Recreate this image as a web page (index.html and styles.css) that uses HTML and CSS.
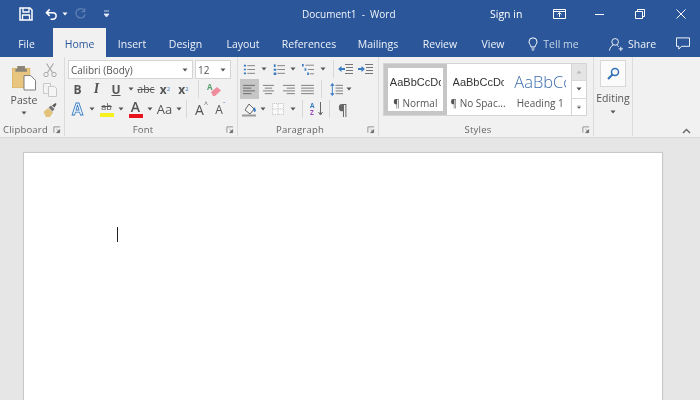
FILE: index.html
```html
<!DOCTYPE html>
<html lang="en">
<head>
<meta charset="utf-8">
<title>Document1 - Word</title>
<link rel="stylesheet" href="styles.css">
</head>
<body>
<svg class="defs" width="0" height="0">
  <symbol id="caret" viewBox="0 0 6 4"><path d="M0.5 0.5h5L3 3.5z" fill="currentColor"/></symbol>
  <symbol id="launch" viewBox="0 0 9 9"><path d="M1 7.500V1h7" fill="none" stroke="#8a8a8a"/><path d="M4 3.500l3 3M7.500 4v3.500H4z" fill="#666" stroke="#666" stroke-width=".7"/></symbol>
  <symbol id="lines3" viewBox="0 0 14 12"><path d="M0 1.500h14M0 4.500h14M0 7.500h14M0 10.500h14" stroke="#777" stroke-width="1"/></symbol>
  <symbol id="center3" viewBox="0 0 14 12"><path d="M1 1.500h12M3 4.500h8M1 7.500h12M3 10.500h8" stroke="#777" stroke-width="1"/></symbol>
  <symbol id="right3" viewBox="0 0 14 12"><path d="M1 1.500h13M5 4.500h9M1 7.500h13M5 10.500h9" stroke="#777" stroke-width="1"/></symbol>
  <symbol id="left3" viewBox="0 0 14 12"><path d="M0 1.500h13M0 4.500h9M0 7.500h13M0 10.500h9" stroke="#666" stroke-width="1"/></symbol>
</svg>

<header class="titlebar">
  <div class="qat">
    <svg class="ico save" viewBox="0 0 14 14"><path d="M1 1h10l2 2v10H1z" fill="none" stroke="#fff" stroke-width="1.500"/><path d="M4 1v4h6V1M3.500 13V8h7v5" fill="none" stroke="#fff" stroke-width="1.300"/></svg>
    <svg class="ico undo" viewBox="0 0 14 14"><path d="M5 1.500L1.500 5 5 8.500M2 5h6.500a3.500 3.500 0 0 1 0 7H6" fill="none" stroke="#fff" stroke-width="1.600"/></svg>
    <svg class="car qcar" viewBox="0 0 6 4"><use href="#caret"/></svg>
    <svg class="ico redo" viewBox="0 0 14 14"><path d="M11 2.500A5 5 0 1 0 12 7M11.500 .5v3.500H8" fill="none" stroke="#5f80b3" stroke-width="1.400"/></svg>
    <svg class="ico cust" viewBox="0 0 7 8"><path d="M1 1h5M1 4h5L3.500 7z" fill="#e8eef7" stroke="#e8eef7" stroke-width=".8"/></svg>
  </div>
  <div class="doc-title">Document1&nbsp; -&nbsp; Word</div>
  <div class="win">
    <span class="signin">Sign in</span>
    <svg class="ico opts" viewBox="0 0 13 10"><path d="M.5 .5h12v9H.5zM.5 2.500h12" fill="none" stroke="#fff"/><path d="M6.500 8V4M4.500 5.500l2-2 2 2" fill="none" stroke="#fff"/></svg>
    <svg class="ico min" viewBox="0 0 10 10"><path d="M0 5.500h9" stroke="#fff" stroke-width="1"/></svg>
    <svg class="ico rest" viewBox="0 0 10 10"><path d="M.5 2.500h7v7h-7zM2.500 2.500v-2h7v7h-2" fill="none" stroke="#fff"/></svg>
    <svg class="ico close" viewBox="0 0 10 10"><path d="M.5 .5l9 9M9.500 .5l-9 9" stroke="#fff" stroke-width="1"/></svg>
  </div>
</header>

<nav class="tabs">
  <a class="tab t-file">File</a>
  <a class="tab t-home active">Home</a>
  <a class="tab t-insert">Insert</a>
  <a class="tab t-design">Design</a>
  <a class="tab t-layout">Layout</a>
  <a class="tab t-refs">References</a>
  <a class="tab t-mail">Mailings</a>
  <a class="tab t-review">Review</a>
  <a class="tab t-view">View</a>
  <a class="tab t-tell">
    <svg class="bulb" viewBox="0 0 10 14"><path d="M3 10C3 8 1 7 1 4.800a4 4 0 0 1 8 0C9 7 7 8 7 10zM3.500 12h3M4.500 13.500h1" fill="none" stroke="#fff"/></svg>
    <span class="tell">Tell me</span>
  </a>
  <a class="tab t-share">
    <svg class="person" viewBox="0 0 16 15"><circle cx="7" cy="4.500" r="3.800" fill="none" stroke="#fff"/><path d="M.5 14.500c.5-3.500 2.500-6 4.500-6.200M9 8.500c1 .4 1.500.8 2 1.500M11 12.500h5M13.500 10v5" fill="none" stroke="#fff"/></svg>
    <span>Share</span>
  </a>
  <svg class="comment" viewBox="0 0 15 13"><path d="M.5 .5h14v9H6l-3 3v-3H.5z" fill="none" stroke="#fff"/></svg>
</nav>

<section class="ribbon">
  <div class="group g-clip">
    <div class="clip-body">
      <div class="paste">
        <svg class="paste-ico" viewBox="0 0 25 26"><rect x=".5" y="3" width="18" height="20" fill="#e8c67f" stroke="#dcb76c"/><rect x="5.500" y=".5" width="8" height="4" fill="#8c8579"/><rect x="3.500" y="3.500" width="12" height="3" fill="#8a8478"/><path d="M12.500 10.500h7l5 5v10h-12z" fill="#fff" stroke="#777"/></svg>
        <span class="paste-l">Paste</span>
        <svg class="car" viewBox="0 0 6 4"><use href="#caret"/></svg>
      </div>
      <div class="clip-tools">
        <svg class="tool" viewBox="0 0 14 14"><path d="M3.500 .5L9.500 9.500M10.500 .5L4.500 9.500" fill="none" stroke="#a8a8a8" stroke-width="1.200"/><circle cx="3" cy="11.500" r="2.200" fill="none" stroke="#a8a8a8"/><circle cx="11" cy="11.500" r="2.200" fill="none" stroke="#a8a8a8"/></svg>
        <svg class="tool" viewBox="0 0 14 14"><path d="M.5 .5h7v3M.5 .5v10h4M5.500 3.500h6l2 2v8h-8z" fill="#f5f5f5" stroke="#c8c8c8"/></svg>
        <svg class="tool" viewBox="0 0 14 14"><path d="M.5 9l4.500-4 5 4.500-3 4.500H3z" fill="#e3c27c"/><path d="M5.500 4.500l2.500-2 3.500 3.500-2 2.500z" fill="#777"/><path d="M9 2.500l3.500-2.500 1 1L11.500 4.500z" fill="#555"/></svg>
      </div>
    </div>
    <div class="glabel"><span>Clipboard</span><svg class="launch" viewBox="0 0 9 9"><use href="#launch"/></svg></div>
  </div>

  <div class="group g-font">
    <div class="font-body">
      <div class="font-top">
        <div class="combo c-name"><span>Calibri (Body)</span><svg class="car" viewBox="0 0 6 4"><use href="#caret"/></svg></div>
        <div class="combo c-size"><span>12</span><svg class="car" viewBox="0 0 6 4"><use href="#caret"/></svg></div>
      </div>
      <div class="rrow">
        <span class="fb w19 bold">B</span>
        <span class="fb w19 ital">I</span>
        <span class="fb w20 under">U</span>
        <svg class="car cw" viewBox="0 0 6 4"><use href="#caret"/></svg>
        <span class="fb w20 strike">abc</span>
        <span class="fb w18 bold sm">x<sub>2</sub></span>
        <span class="fb w19 bold sm">x<sup>2</sup></span>
        <span class="vsep sp-e"></span>
        <svg class="tool eraser" viewBox="0 0 16 15"><text x="1" y="8" class="era-a">A</text><path d="M5 10l6-5 4 3.500-6 5.500H7z" fill="#ee8d9d"/></svg>
      </div>
      <div class="rrow">
        <span class="fb w19 a-blue">A</span>
        <svg class="car cs" viewBox="0 0 6 4"><use href="#caret"/></svg>
        <span class="fb w19 hl"><span class="hl-t">ab</span><i class="bar yellow"></i></span>
        <svg class="car cs" viewBox="0 0 6 4"><use href="#caret"/></svg>
        <span class="fb w19 col"><span class="col-t">A</span><i class="bar red"></i></span>
        <svg class="car cs" viewBox="0 0 6 4"><use href="#caret"/></svg>
        <span class="fb w19 aa">Aa</span>
        <svg class="car cs" viewBox="0 0 6 4"><use href="#caret"/></svg>
        <span class="vsep sp-g"></span>
        <span class="fb w19 grow">A<b class="hat">^</b></span>
        <span class="fb w19 shrink">A<b class="hat blue">ˇ</b></span>
      </div>
    </div>
    <div class="glabel"><span>Font</span><svg class="launch" viewBox="0 0 9 9"><use href="#launch"/></svg></div>
  </div>

  <div class="group g-para">
    <div class="para-body">
      <div class="rrow r-lists">
        <svg class="pi" viewBox="0 0 14 14"><path d="M5 2.500h9M5 7h9M5 11.500h9" stroke="#777"/><path d="M1 1.500h2.500v2H1zM1 6h2.500v2H1zM1 10.500h2.500v2H1z" fill="#3a7cc2"/></svg>
        <svg class="car cp" viewBox="0 0 6 4"><use href="#caret"/></svg>
        <svg class="pi" viewBox="0 0 14 14"><path d="M5 2.500h9M5 7h9M5 11.500h9" stroke="#777"/><path d="M1 1h2v3H1zM.8 6h3v2.500h-3zM.8 10.500h3v3h-3z" fill="#3a7cc2"/></svg>
        <svg class="car cp" viewBox="0 0 6 4"><use href="#caret"/></svg>
        <svg class="pi" viewBox="0 0 14 14"><path d="M4 2h10M7 7h7M9 12h5" stroke="#777"/><path d="M0 .5h2v3H0zM3 5.500h2v3H3zM6 10.500h2v3H6z" fill="#3a7cc2"/></svg>
        <svg class="car cp" viewBox="0 0 6 4"><use href="#caret"/></svg>
        <span class="vsep sp-ind"></span>
        <svg class="pi ind1" viewBox="0 0 15 12"><path d="M7 1.500h8M8 4.500h7M8 7.500h7M7 10.500h8" stroke="#777"/><path d="M0 6l3.500-3v2H7v2H3.500v2z" fill="#3a7cc2"/></svg>
        <svg class="pi ind2" viewBox="0 0 15 12"><path d="M7 1.500h8M8 4.500h7M8 7.500h7M7 10.500h8" stroke="#777"/><path d="M7 6L3.500 3v2H0v2h3.500v2z" fill="#3a7cc2"/></svg>
      </div>
      <div class="rrow">
        <span class="al on"><svg viewBox="0 0 14 12"><use href="#left3"/></svg></span>
        <span class="al"><svg viewBox="0 0 14 12"><use href="#center3"/></svg></span>
        <span class="al"><svg viewBox="0 0 14 12"><use href="#right3"/></svg></span>
        <span class="al"><svg viewBox="0 0 14 12"><use href="#lines3"/></svg></span>
        <span class="vsep sp-sp"></span>
        <svg class="pi spacing" viewBox="0 0 14 14"><path d="M6 2.500h8M6 5.500h8M6 8.500h8M6 11.500h8" stroke="#777"/><path d="M2.500 0L5 3H0zM2.500 14L5 11H0z M2 3h1v8H2z" fill="#3a7cc2"/></svg>
        <svg class="car cp" viewBox="0 0 6 4"><use href="#caret"/></svg>
      </div>
      <div class="rrow">
        <svg class="pi shade" viewBox="0 0 15 15"><path d="M3 8l4-6 5 5-4 5z" fill="#f5f5f5" stroke="#666"/><path d="M12 5c2 1.500 2.500 4 1.200 4.800S10.500 8 12 5z" fill="#3a7cc2"/><path d="M0 13.500h14" stroke="#999" stroke-width="2"/></svg>
        <svg class="car cp" viewBox="0 0 6 4"><use href="#caret"/></svg>
        <svg class="pi borders" viewBox="0 0 13 13"><path d="M.5 .5h12v12H.5z" fill="#fafafa" stroke="#bbb" stroke-dasharray="1 1"/><path d="M6.500 1v11M1 6.500h11" stroke="#bbb" stroke-dasharray="1 1"/></svg>
        <svg class="car cb" viewBox="0 0 6 4"><use href="#caret"/></svg>
        <span class="vsep sp-so"></span>
        <span class="sort"><span class="az"><i class="a-t">A</i><i class="z-t">Z</i></span><svg viewBox="0 0 5 14"><path d="M2.500 0v13M.5 10l2 3 2-3" fill="none" stroke="#666"/></svg></span>
        <span class="vsep sp-pi"></span>
        <span class="pilcrow">¶</span>
      </div>
    </div>
    <div class="glabel"><span>Paragraph</span><svg class="launch" viewBox="0 0 9 9"><use href="#launch"/></svg></div>
  </div>

  <div class="group g-styles">
    <div class="gallery">
      <div class="style s-normal"><span class="prev">AaBbCcDc</span><span class="nm">¶ Normal</span></div>
      <div class="style"><span class="prev">AaBbCcDc</span><span class="nm">¶ No Spac...</span></div>
      <div class="style s-head"><span class="prev h1">AaBbCc</span><span class="nm">Heading 1</span></div>
      <div class="scroller">
        <span class="sb up"><svg class="car" viewBox="0 0 6 4"><path d="M.5 3.500h5L3 .5z" fill="#b8b8b8"/></svg></span>
        <span class="sb"><svg class="car" viewBox="0 0 6 4"><use href="#caret"/></svg></span>
        <span class="sb"><svg class="car" viewBox="0 0 6 6"><path d="M.5 .5h5M.5 2.500h5L3 5.500z" fill="#555" stroke="#555" stroke-width=".4"/></svg></span>
      </div>
    </div>
    <div class="glabel"><span>Styles</span><svg class="launch" viewBox="0 0 9 9"><use href="#launch"/></svg></div>
  </div>

  <div class="group g-edit">
    <div class="find"><svg viewBox="0 0 13 13"><circle cx="8" cy="5" r="3.500" fill="none" stroke="#2f6fb5" stroke-width="1.500"/><path d="M5.500 7.500L1 12" stroke="#2f6fb5" stroke-width="2"/></svg></div>
    <span class="edit-l">Editing</span>
    <svg class="car" viewBox="0 0 6 4"><use href="#caret"/></svg>
  </div>

  <div class="collapse">
    <svg viewBox="0 0 9 6"><path d="M1 5l3.500-3.500L8 5" fill="none" stroke="#666" stroke-width="1.400"/></svg>
  </div>
</section>

<main class="workspace">
  <div class="page"><div class="cursor"></div></div>
</main>
</body>
</html>
```

FILE: styles.css
```css
* { box-sizing: border-box; }
html, body { margin: 0; height: 100%; }
body {
  width: 700px; height: 400px; overflow: hidden;
  font-family: "Open Sans", "Noto Sans", sans-serif;
  font-size: 10.5px; color: #444; background: #e6e6e6;
  filter: blur(.45px);
}
svg { display: block; flex: none; }
.defs { position: absolute; }
.car { width: 6px; height: 4px; color: #555; }

.titlebar { height: 28px; background: #2b579a; color: #fff; display: flex; align-items: center; }
.qat { width: 302px; display: flex; align-items: center; padding-left: 19px; }
.ico { width: 13px; height: 13px; }
.save { width: 14px; height: 14px; }
.undo { margin-left: 12px; }
.qcar { margin-left: 4px; color: #fff; }
.redo { margin-left: 6px; }
.cust { width: 7px; height: 8px; margin-left: 16px; }
.doc-title { width: 100px; white-space: nowrap; font-size: 10px; color: #f0f4fa; }
.win { margin-left: 88px; display: flex; align-items: center; }
.signin { width: 32px; white-space: nowrap; }
.opts { margin-left: 31px; height: 10px; }
.min { margin-left: 29px; width: 10px; height: 10px; }
.rest { margin-left: 30px; width: 10px; height: 10px; }
.close { margin-left: 31px; width: 10px; height: 10px; }

.tabs { height: 29px; background: #2b579a; color: #fff; display: flex; align-items: stretch; }
.tab { display: flex; align-items: center; justify-content: center; padding-top: 3px; white-space: nowrap; color: #eef2f9; }
.t-file { width: 53px; }
.t-home { width: 53px; }
.t-insert { width: 52px; }
.t-design { width: 55px; }
.t-layout { width: 60px; }
.t-refs { width: 72px; }
.t-mail { width: 66px; }
.t-review { width: 58px; }
.t-view { width: 48px; }
.t-tell { width: 70px; gap: 5px; padding-left: 3px; }
.t-share { width: 70px; margin-left: 22px; gap: 5px; justify-content: flex-start; }
.active { background: #f1f1f1; color: #2b579a; }
.tell { color: #c6d4e8; }
.bulb { width: 10px; height: 14px; }
.person { width: 14px; height: 15px; }
.comment { width: 14px; height: 13px; margin: 9px 0 0 -3px; }

.ribbon {
  height: 81px; background: #f1f1f1; display: flex;
  border-bottom: 1px solid #dadada; color: #555;
}
.group { position: relative; border-right: 1px solid #dcdcdc; margin-bottom: 1px; }
.glabel {
  position: absolute; left: 0; right: 0; bottom: -1px; height: 15px;
  display: flex; align-items: center; justify-content: center; padding-right: 16px;
  font-size: 9.5px; color: #666; letter-spacing: .2px;
}
.launch { position: absolute; right: 3px; top: 4px; width: 8px; height: 8px; }

.g-clip { width: 65px; }
.g-clip .glabel { justify-content: flex-start; padding-left: 3px; }
.clip-body { display: flex; padding: 6px 0 0 12px; }
.paste { width: 24px; display: flex; flex-direction: column; align-items: center; }
.paste-ico { width: 24px; height: 26px; margin-top: 2px; }
.paste-l { margin-top: 1px; line-height: 16px; }
.paste .car { margin-top: 3px; }
.clip-tools { margin: 0 0 0 7px; display: flex; flex-direction: column; gap: 6px; }
.tool { width: 14px; height: 14px; }

.g-font { width: 173px; padding: 3px 0 0 3px; }
.font-body { display: flex; flex-direction: column; }
.font-top { display: flex; gap: 2px; height: 19px; }
.combo {
  height: 19px; background: #fff; border: 1px solid #d4d4d4;
  display: flex; align-items: center; justify-content: space-between; padding: 0 4px 0 2px;
  color: #555; font-size: 10px;
}
.c-name { width: 125px; }
.c-size { width: 36px; }
.rrow { display: flex; align-items: center; height: 20px; }
.fb { display: flex; align-items: center; justify-content: center; height: 20px; position: relative; font-size: 12px; }
.w18 { width: 18px; } .w19 { width: 19px; } .w20 { width: 20px; }
.cw { margin: 0 2px 0 2px; }
.bold { font-weight: 700; }
.ital { font-style: italic; font-family: "Liberation Serif", serif; font-size: 14px; font-weight: 700; }
.under { text-decoration: underline; font-weight: 700; }
.strike { text-decoration: line-through; font-size: 10.5px; }
.sm { font-size: 12px; }
sub, sup { font-size: 6px; font-weight: 400; color: #3a7cc2; line-height: 0; }
.sp-e { margin: 0 3px 0 5px; }
.eraser { width: 16px; height: 15px; margin-left: 4px; }
.era-a { font-size: 8px; fill: #5a9e6f; font-weight: 700; }
.vsep { width: 1px; height: 18px; background: #d8d8d8; flex: none; }
.a-blue { color: #eef5fb; font-size: 16px; font-weight: 700; -webkit-text-stroke: .8px #3a7cc2; }
.cs { margin: 0 2px 0 2px; }
.hl, .col { flex-direction: column; }
.hl-t { font-size: 9px; line-height: 10px; text-decoration: line-through; }
.col-t { font-size: 14px; line-height: 12px; font-weight: 600; }
.bar { display: block; width: 14px; height: 4px; margin-top: 1px; }
.yellow { background: #f5f01e; }
.red { background: #e8141c; }
.aa { font-size: 13px; }
.sp-g { margin: 0 5px 0 2px; }
.grow { font-size: 14px; }
.shrink { font-size: 12px; }
.hat { font-size: 7px; font-weight: 400; align-self: flex-start; margin-top: 2px; color: #666; line-height: 8px; }
.blue { color: #3a7cc2; }

.g-para { width: 141px; padding: 2px 0 0 2px; }
.para-body { display: flex; flex-direction: column; }
.pi { width: 13px; height: 13px; margin-left: 5px; }
.cp { margin: 0 0 0 3px; }
.r-lists .pi { width: 12px; margin-left: 6px; }
.r-lists .pi:first-child { margin-left: 3px; }
.r-lists .cp { margin-left: 5.500px; }
.sp-ind { margin-left: 7.500px; }
.r-lists .ind1 { width: 15px; height: 12px; margin-left: 4px; }
.r-lists .ind2 { width: 15px; height: 12px; margin-left: 5px; }
.al { width: 19.300px; height: 20px; display: flex; align-items: center; justify-content: center; }
.al svg { width: 13px; height: 11px; }
.on { background: #c6c6c6; }
.sp-sp { margin: 0 2px 0 4px; }
.spacing { margin-left: 6px; }
.shade { width: 15px; height: 15px; margin-left: 2px; }
.cp + .borders { margin-left: 6px; }
.borders { width: 12px; height: 12px; }
.cb { margin-left: 6px; }
.sp-so { margin-left: 6px; }
.sort { display: flex; margin-left: 7px; align-items: center; gap: 1px; }
.sort svg { width: 5px; height: 14px; }
.az { display: flex; flex-direction: column; font-size: 6.500px; line-height: 7.500px; font-weight: 700; width: 7px; }
.az i { font-style: normal; }
.a-t { color: #3a7cc2; }
.z-t { color: #a24ac0; }
.sp-pi { margin-left: 6px; }
.pilcrow { margin-left: 8px; font-size: 15px; font-weight: 600; color: #666; }

.g-styles { width: 215px; padding: 6px 0 0 4px; }
.gallery { display: flex; width: 204px; height: 53px; background: #fff; border: 1px solid #d4d4d4; }
.style { width: 63px; display: flex; flex-direction: column; align-items: center; overflow: hidden; padding-top: 10px; white-space: nowrap; }
.s-normal { border: 4px solid #c6c6c6; padding-top: 6px; width: 63px; }
.prev { font-family: "Liberation Sans", Calibri, sans-serif; font-size: 11px; line-height: 16px; height: 16px; width: 51px; overflow: hidden; color: #333; }
.nm { margin-top: 6px; font-size: 10px; line-height: 14px; }
.s-head { width: 62px; }
.h1 { width: 52px; font-size: 16.500px; color: #3f6fae; font-family: "Open Sans", sans-serif; font-weight: 300; }
.scroller { margin-left: auto; width: 15px; display: flex; flex-direction: column; border-left: 1px solid #d4d4d4; }
.sb { flex: 1; display: flex; align-items: center; justify-content: center; border-bottom: 1px solid #d8d8d8; background: #fff; }
.sb:last-child { border-bottom: 0; }
.up { background: #e4e4e4; }

.g-edit { width: 39px; display: flex; flex-direction: column; align-items: center; padding-top: 3px; }
.find { width: 26px; height: 27px; background: #fbfbfb; border: 1px solid #d8d8d8; display: flex; align-items: center; justify-content: center; }
.find svg { width: 13px; height: 13px; }
.edit-l { margin-top: 4px; line-height: 14px; font-size: 10.500px; }
.g-edit .car { margin-top: 5px; }
.collapse { margin-left: auto; align-self: flex-end; padding: 0 9px 3px 0; }
.collapse svg { width: 9px; height: 6px; }

.workspace { height: 263px; padding: 14px 0 0 23px; }
.page { width: 640px; height: 260px; background: #fff; border: 1px solid #c8c8c8; box-shadow: 0 0 2px #d8d8d8; padding: 74px 0 0 93px; }
.cursor { width: 1px; height: 15px; background: #222; }
```
